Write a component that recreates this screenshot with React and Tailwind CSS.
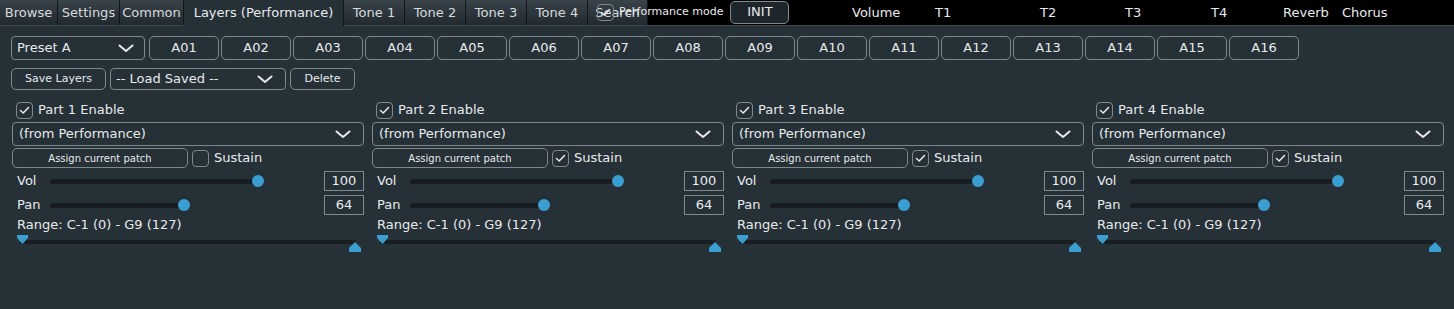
import React from "react";

const presets = Array.from({ length: 16 }, (_, i) => "A" + String(i + 1).padStart(2, "0"));

const tabs = [
  { label: "Browse", w: "w-[58px]" },
  { label: "Settings", w: "w-[62px]" },
  { label: "Common", w: "w-[64px]" },
  { label: "Layers (Performance)", w: "w-[160px]", active: true },
  { label: "Tone 1", w: "w-[61px]" },
  { label: "Tone 2", w: "w-[61px]" },
  { label: "Tone 3", w: "w-[61px]" },
  { label: "Tone 4", w: "w-[61px]" },
  { label: "Search", w: "w-[60px]" },
];

const mixer = [
  { label: "Volume", w: "w-[83px]" },
  { label: "T1", w: "w-[105px]" },
  { label: "T2", w: "w-[85px]" },
  { label: "T3", w: "w-[86px]" },
  { label: "T4", w: "w-[72px]" },
  { label: "Reverb", w: "w-[59px]" },
  { label: "Chorus", w: "w-[60px]" },
];

const parts = [
  { n: 1, sustain: false },
  { n: 2, sustain: true },
  { n: 3, sustain: true },
  { n: 4, sustain: true },
];

function Chevron() {
  return (
    <svg width="16" height="9" viewBox="0 0 16 9" className="shrink-0">
      <path d="M1.5 1.5 L8 7 L14.5 1.5" fill="none" stroke="#e8eaec" strokeWidth="2" strokeLinecap="round" strokeLinejoin="round" />
    </svg>
  );
}

function Check({ on }) {
  return (
    <div className="w-[17px] h-[17px] rounded-[4px] border border-[#7f888d] flex items-center justify-center shrink-0">
      {on && (
        <svg width="11" height="9" viewBox="0 0 11 9">
          <path d="M1.5 4.5 L4.2 7 L9.5 1.5" fill="none" stroke="#e8eaec" strokeWidth="1.5" strokeLinecap="round" strokeLinejoin="round" />
        </svg>
      )}
    </div>
  );
}

function Slider({ pct }) {
  return (
    <div className="relative flex-1 h-[12px] flex items-center">
      <div className="w-full h-[5px] rounded-full bg-[#171d21]" />
      <div
        className="absolute top-0 w-[12px] h-[12px] rounded-full bg-[#3a9ed0]"
        style={{ left: `calc(${pct}% - 6px)` }}
      />
    </div>
  );
}

function Part({ n, sustain }) {
  return (
    <div className="w-[352px] flex flex-col">
      <div className="flex items-center gap-[5px] pl-[4px] h-[18px] mt-px">
        <Check on />
        <span className="text-[13px]">Part {n} Enable</span>
      </div>
      <div className="mt-[3px] h-[24px] border border-[#7f888d] rounded-[4px] flex items-center justify-between pl-[6px] pr-[12px]">
        <span className="text-[13px]">(from Performance)</span>
        <Chevron />
      </div>
      <div className="mt-[2px] flex items-center h-[20px]">
        <div className="w-[176px] h-[20px] border border-[#7f888d] rounded-[5px] flex items-center justify-center text-[10px]">
          Assign current patch
        </div>
        <div className="ml-[4px]">
          <Check on={sustain} />
        </div>
        <span className="ml-[5px] text-[13px]">Sustain</span>
      </div>
      <div className="mt-[3px] flex items-center h-[20px]">
        <span className="w-[38px] pl-[5px] text-[13px]">Vol</span>
        <div className="w-[214px] flex">
          <Slider pct={97} />
        </div>
        <div className="ml-auto w-[40px] h-[20px] border border-[#7f888d] flex items-center justify-center text-[13px]">100</div>
      </div>
      <div className="mt-[4px] flex items-center h-[20px]">
        <span className="w-[38px] pl-[5px] text-[13px]">Pan</span>
        <div className="w-[140px] flex">
          <Slider pct={96} />
        </div>
        <div className="ml-auto w-[40px] h-[20px] border border-[#7f888d] flex items-center justify-center text-[13px]">64</div>
      </div>
      <div className="mt-[2px] pl-[5px] text-[13px] leading-[16px]">Range: C-1 (0) - G9 (127)</div>
      <div className="relative mt-[2px] ml-[5px] mr-[5px] h-[18px]">
        <div className="absolute left-[3px] right-[3px] top-[5px] h-[4px] rounded-full bg-[#171d21]" />
        <svg width="11" height="9" viewBox="0 0 11 9" className="absolute left-0 top-0">
          <path d="M0 0 H11 V3 L5.5 9 L0 3 Z" fill="#3a9ed0" />
        </svg>
        <svg width="12" height="10" viewBox="0 0 12 10" className="absolute right-[-2px] top-[7px]">
          <path d="M0 10 H12 V6 L6 0 L0 6 Z" fill="#3a9ed0" />
        </svg>
      </div>
    </div>
  );
}

export default function App() {
  return (
    <div className="w-[1454px] h-[309px] bg-[#263037] text-[#e8eaec] overflow-hidden font-['DejaVu_Sans',sans-serif]">
      {/* top bar */}
      <div className="relative h-[26px] bg-black flex border-b border-[#3b454c]">
        <div className="flex h-[25px]">
          {tabs.map((t) => (
            <div
              key={t.label}
              className={`${t.w} h-[25px] border-r border-[#11161a] flex items-center justify-center text-[13px] ${
                t.active
                  ? "bg-[#263037] -mb-px h-[26px]"
                  : "bg-gradient-to-b from-[#39434a] to-[#222a2f] text-[#d6dadd]"
              }`}
            >
              {t.label}
            </div>
          ))}
        </div>
        {/* performance mode overlay sits over the Search tab */}
        <div className="absolute left-[597px] top-[2px] flex items-center h-[21px]">
          <Check on />
          <span className="ml-[5px] text-[11px]">Performance mode</span>
          <div className="ml-[7px] w-[59px] h-[23px] -mt-px rounded-[5px] border border-[#7f888d] bg-[#1e262b] flex items-center justify-center text-[13px]">
            INIT
          </div>
        </div>
        <div className="ml-[204px] flex items-center h-[25px] text-[13px]">
          {mixer.map((m) => (
            <div key={m.label} className={m.w}>
              {m.label}
            </div>
          ))}
        </div>
      </div>

      {/* presets row */}
      <div className="mt-[10px] pl-[11px] flex gap-[2px] h-[24px]">
        <div className="w-[134px] h-[24px] border border-[#7f888d] rounded-[4px] flex items-center justify-between pl-[5px] pr-[10px] text-[13px]">
          <span>Preset A</span>
          <Chevron />
        </div>
        <div className="flex gap-[2px] ml-[2px]">
          {presets.map((p) => (
            <div key={p} className="w-[70px] h-[24px] border border-[#7f888d] rounded-[5px] flex items-center justify-center text-[13px]">
              {p}
            </div>
          ))}
        </div>
      </div>

      {/* save row */}
      <div className="mt-[8px] pl-[11px] flex items-center gap-[4px] h-[22px]">
        <div className="w-[95px] h-[22px] border border-[#7f888d] rounded-[5px] flex items-center justify-center text-[11px]">
          Save Layers
        </div>
        <div className="w-[176px] h-[22px] border border-[#7f888d] rounded-[4px] flex items-center justify-between pl-[5px] pr-[12px] text-[13px]">
          <span>-- Load Saved --</span>
          <Chevron />
        </div>
        <div className="w-[65px] h-[22px] border border-[#7f888d] rounded-[5px] flex items-center justify-center text-[11px]">
          Delete
        </div>
      </div>

      {/* parts */}
      <div className="mt-[10px] pl-[12px] flex gap-[8px]">
        {parts.map((p) => (
          <Part key={p.n} {...p} />
        ))}
      </div>
    </div>
  );
}
